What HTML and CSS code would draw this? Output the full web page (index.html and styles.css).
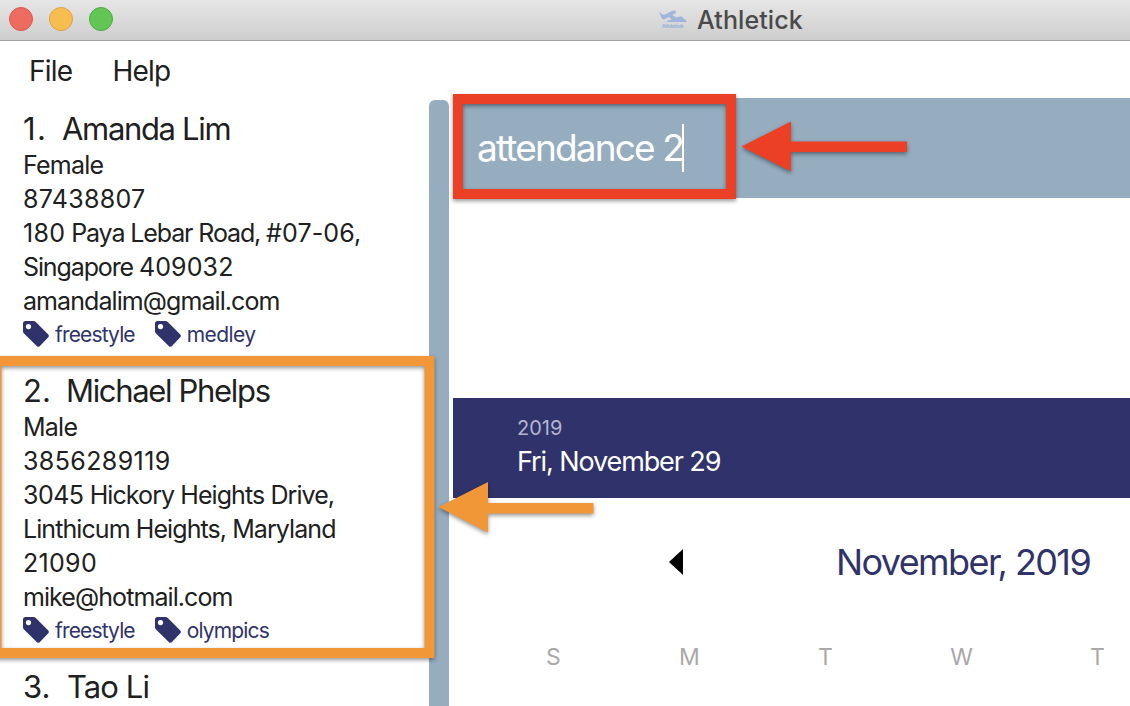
FILE: index.html
```html
<!DOCTYPE html>
<html lang="en">
<head>
<meta charset="utf-8">
<title>Athletick</title>
<link rel="stylesheet" href="styles.css">
</head>
<body>
<svg class="defs" width="0" height="0" aria-hidden="true">
  <symbol id="tag" viewBox="0 0 26 26">
    <path fill-rule="evenodd" d="M2.5 0H10.5Q11.8 0 12.8 1L25.3 13.5Q26.5 14.8 25.3 16.2L16.7 25.2Q15.4 26.5 14 25.2L1 12.6Q0 11.6 0 10.5V2.5Q0 0 2.5 0ZM5.5 3A2.6 2.6 0 1 0 5.5 8.2A2.6 2.6 0 1 0 5.5 3Z"/>
  </symbol>
</svg>
<header class="titlebar">
  <div class="lights"><i class="light red"></i><i class="light yellow"></i><i class="light green"></i></div>
  <div class="title">
    <svg class="logo" width="28" height="20" viewBox="0 0 28 20">
      <path d="M.3 2Q2 2.5 3.2 4.6L5.5 4.8L13.5 .8Q17 0 17.2 2.2Q17 3.6 13.2 4.8L17 7.6L21 6.4Q24 6.2 24.6 8.8L27.5 10.6V12H7.3Q8 10.2 13 9.4L9.9 6.7L5.4 9.3Q3.2 9.8 2.2 7.3Z"/>
      <text x="2.8" y="17.8" textLength="22">Athletick</text>
    </svg>
    <span>Athletick</span>
  </div>
</header>
<nav class="menu"><span>File</span><span>Help</span></nav>
<main class="content">
  <section class="people">
    <article class="card">
      <h2><span class="num n1">1.</span><span>Amanda Lim</span></h2>
      <p class="loose">Female</p>
      <p><span class="digits wide">87438807</span></p>
      <p class="tight"><span class="digits wide">180</span> Paya Lebar Road, <span class="digits">#07-06,</span></p>
      <p class="tight">Singapore <span class="digits">409032</span></p>
      <p>amandalim@gmail.com</p>
      <div class="tags"><span class="tag"><svg><use href="#tag"/></svg>freestyle</span><span class="tag loose"><svg><use href="#tag"/></svg>medley</span></div>
    </article>
    <article class="card">
      <h2><span class="num n2">2.</span><span>Michael Phelps</span></h2>
      <p class="loose">Male</p>
      <p><span class="digits wider">3856289119</span></p>
      <p><span class="digits short">3045</span> Hickory Heights Drive,</p>
      <p>Linthicum Heights, Maryland</p>
      <p><span class="digits wide">21090</span></p>
      <p>mike@hotmail.com</p>
      <div class="tags"><span class="tag"><svg><use href="#tag"/></svg>freestyle</span><span class="tag"><svg><use href="#tag"/></svg>olympics</span></div>
    </article>
    <article class="card">
      <h2><span class="num n3">3.</span><span class="loose">Tao Li</span></h2>
    </article>
  </section>
  <div class="scrollbar"></div>
  <section class="right">
    <div class="command"><span class="entry">attendance 2</span><i class="caret"></i></div>
    <div class="result"></div>
    <div class="date"><div class="year">2019</div><div class="day">Fri, November 29</div></div>
    <div class="month">
      <svg class="prev" width="14" height="26" viewBox="0 0 14 26"><path d="M14 0V26L0 13Z"/></svg>
      <span class="monthname">November, 2019</span>
    </div>
    <div class="week"><span>S</span><span>M</span><span>T</span><span>W</span><span>T</span></div>
  </section>
</main>
<svg class="notes" width="1130" height="706" viewBox="0 0 1130 706">
  <g class="note-red">
    <rect x="458" y="99" width="273" height="95"/>
    <path d="M741.5 146.5L791 121.5V141.5H907V152H791V171.5Z"/>
  </g>
  <g class="note-orange">
    <rect x="-3.5" y="361" width="433" height="292"/>
    <path d="M438.5 507L488 482V503H593.5V513.5H488V532.5Z"/>
  </g>
</svg>
</body>
</html>
```
FILE: styles.css
```css
* { box-sizing: border-box; margin: 0; padding: 0; }
body { width: 1130px; height: 706px; overflow: hidden; background: #fff; color: #202020; font-family: Inter, "Liberation Sans", sans-serif; position: relative; display: flex; flex-direction: column; }
.defs { position: absolute; }
.titlebar { height: 41px; flex: none; background: linear-gradient(#e6e6e6, #cecece); border-bottom: 1.5px solid #a3a3a3; display: grid; grid-template-columns: 659px 1fr; }
.lights { display: flex; gap: 16px; padding: 7px 0 0 9px; }
.light { width: 24px; height: 24px; border-radius: 50%; border: 1px solid; }
.red { background: #ee6b60; border-color: #d9584e; }
.yellow { background: #f6be50; border-color: #dca23b; }
.green { background: #62c655; border-color: #4bab40; }
.title { display: flex; font-size: 25px; line-height: 41px; color: #4a4a4a; gap: 10px; letter-spacing: .1px; font-weight: 500; }
.logo { margin-top: 10px; fill: #9fb6dc; }
.logo text { font-size: 5.4px; font-weight: 800; letter-spacing: 0; }
.menu { height: 59px; flex: none; display: flex; padding: 0 0 0 29px; gap: 40px; font-size: 28px; line-height: 60px; letter-spacing: -.75px; }
.content { flex: 1; min-height: 0; display: grid; grid-template-columns: 429px 20px 1fr; }
.people { overflow: hidden; padding-left: 23px; }
.card { padding: 10px 0 12px; }
.card h2 { font-size: 31px; line-height: 38px; font-weight: 400; letter-spacing: -1.33px; display: flex; }
.num { flex: none; width: 39px; letter-spacing: 0; }
.n1 { letter-spacing: 1.5px; }
.n2 { width: 43px; }
.n3 { width: 44px; }
.card p { font-size: 25px; line-height: 34px; letter-spacing: -.92px; white-space: nowrap; }
.card p.loose { letter-spacing: -.75px; }
.card p.tight { letter-spacing: -1.12px; }
.digits { letter-spacing: .12px; }
.digits.short { letter-spacing: -.5px; }
.digits.wide { letter-spacing: .3px; }
.digits.wider { letter-spacing: .4px; }
.card h2 .loose { letter-spacing: -.9px; }
.tags { display: flex; gap: 20px; height: 32px; line-height: 34px; font-size: 21px; color: #30336b; letter-spacing: -.85px; }
.tag { display: flex; gap: 6px; }
.tag.loose { letter-spacing: -.6px; }
.tag svg { width: 26px; height: 26px; margin-top: 3px; fill: #30336b; }
.scrollbar { background: #95adbf; border-radius: 6px 6px 0 0; }
.right { margin: -2px 0 0 4px; overflow: hidden; }
.command { height: 100px; background: #95adbf; color: #fff; display: flex; align-items: center; padding-left: 24px; font-size: 37px; letter-spacing: -1.85px; }
.entry { padding-bottom: 2px; margin-right: -1px; }
.caret { width: 2px; height: 48px; background: #fff; }
.result { height: 200px; }
.date { height: 100px; background: #30336b; padding: 16px 0 0 64px; }
.year { font-size: 20px; line-height: 28px; color: #b4b5cc; }
.day { font-size: 27px; line-height: 40px; color: #fff; letter-spacing: -1.1px; }
.month { height: 128px; display: flex; align-items: center; padding-left: 216px; }
.monthname { margin-left: 153px; font-size: 36px; color: #30336b; letter-spacing: -1.6px; white-space: nowrap; }
.week { display: grid; grid-template-columns: repeat(5, 136px); padding-left: 32.5px; text-align: center; font-size: 23px; line-height: 62px; color: #a9a9a9; }
.notes { position: absolute; left: 0; top: 0; }
.notes rect { fill: none; stroke-width: 10; }
.note-red, .note-orange { filter: drop-shadow(0 2px 2px rgba(0,0,0,.42)); }
.note-red rect { stroke: #eb4026; }
.note-red path { fill: #eb4026; }
.note-orange rect { stroke: #f19737; }
.note-orange path { fill: #f19737; }
```
